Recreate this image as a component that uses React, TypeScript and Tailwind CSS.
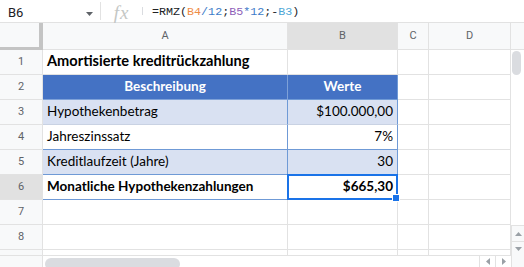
import React from "react";

const G = "border-[#e2e2e2]";

function RowHeader({ n, sel }: { n: number; sel?: boolean }) {
  return (
    <div
      className={`flex items-center justify-center border-r border-b ${G} text-[11px] text-[#5f6368] ${
        sel ? "bg-[#e1e1e1]" : "bg-[#f8f9fa]"
      }`}
      style={{ fontFamily: "Roboto, Arial, sans-serif" }}
    >
      {n}
    </div>
  );
}

function Blank({ extra = "" }: { extra?: string }) {
  return <div className={`border-r border-b ${G} bg-white ${extra}`} />;
}

const cal = { fontFamily: "Lato, 'Open Sans', sans-serif" };

export default function App() {
  return (
    <div className="w-[524px] h-[267px] overflow-hidden bg-white relative select-none">
      {/* Formula bar */}
      <div className={`h-[23px] flex items-stretch border-b ${G}`}>
        <div className="w-[100px] flex items-center pl-[8px] pr-[7px] pt-[4px]">
          <span className="text-[13px] text-[#202124] flex-1" style={{ fontFamily: "Roboto, Arial, sans-serif" }}>
            B6
          </span>
          <svg width="7" height="4" viewBox="0 0 7 4" className="mb-[-2px]">
            <path d="M0 0 L7 0 L3.5 4 Z" fill="#5f6368" />
          </svg>
        </div>
        <div className={`w-px bg-[#e2e2e2] my-[2px]`} />
        <div className="w-[41px] flex items-center justify-center pt-[2px]">
          <span
            className="text-[19px] italic text-[#c4c7c5] leading-none tracking-[1px]"
            style={{ fontFamily: "'Liberation Serif', serif" }}
          >
            fx
          </span>
        </div>
        <div className="w-px bg-[#dadce0] my-[7px]" />
        <div
          className="flex items-center pl-[9px] pt-[4px] text-[11.7px] text-[#202124]"
          style={{ fontFamily: "'Liberation Mono', 'DejaVu Sans Mono', monospace" }}
        >
          <span>=RMZ(</span>
          <span className="text-[#ef8c46]">B4</span>
          <span className="text-[#3d7cc9]">/12</span>
          <span>;</span>
          <span className="text-[#8f5fb9]">B5</span>
          <span className="text-[#3d7cc9]">*12</span>
          <span>;-</span>
          <span className="text-[#4ea6d6]">B3</span>
          <span>)</span>
        </div>
      </div>

      {/* Grid */}
      <div className="grid grid-cols-[43px_245px_110px_31px_82px_13px] grid-rows-[27px_25px_25px_25px_25px_25px_25px_25px_25px_6px]">
        {/* Vertical scrollbar */}
        <div className={`col-start-6 row-start-2 row-span-9 flex flex-col bg-white`}>
          <div className="flex-1 relative">
            <div className="absolute left-[1px] top-[1px] w-[9px] h-[24px] rounded-full bg-[#dadce0]" />
          </div>
          <div className={`h-[16px] border-t border-l ${G} bg-[#f8f9fa] flex items-center justify-center`}>
            <svg width="7" height="4" viewBox="0 0 7 4">
              <path d="M0 4 L7 4 L3.5 0 Z" fill="#9aa0a6" />
            </svg>
          </div>
          <div className={`h-[15px] border-t border-l ${G} bg-[#f8f9fa] flex items-center justify-center`}>
            <svg width="7" height="4" viewBox="0 0 7 4">
              <path d="M0 0 L7 0 L3.5 4 Z" fill="#9aa0a6" />
            </svg>
          </div>
        </div>

        {/* Header row */}
        <div className="bg-[#f8f9fa] border-r-4 border-b-[3px] border-[#c4c4c4]" />
        {["A", "B", "C", "D"].map((c) => (
          <div
            key={c}
            className={`flex items-center justify-center border-r border-b ${G} text-[11px] text-[#5f6368] ${
              c === "B" ? "bg-[#e1e1e1]" : "bg-[#f8f9fa]"
            }`}
            style={{ fontFamily: "Roboto, Arial, sans-serif" }}
          >
            {c}
          </div>
        ))}
        <div className={`border-b ${G} bg-[#f8f9fa]`} />

        {/* Row 1 */}
        <RowHeader n={1} />
        <div
          className={`flex items-end pb-[2px] pl-[4px] border-r border-b ${G} text-[14.6px] font-bold text-black whitespace-nowrap`}
          style={cal}
        >
          Amortisierte kreditrückzahlung
        </div>
        <Blank />
        <Blank />
        <Blank />

        {/* Row 2 */}
        <RowHeader n={2} />
        <div
          className="flex items-end justify-center pb-[3px] bg-[#4472c4] border-r border-b border-[#7ea1d8] text-[13.5px] font-bold text-white"
          style={cal}
        >
          Beschreibung
        </div>
        <div
          className="flex items-end justify-center pb-[3px] bg-[#4472c4] border-r border-b border-[#6f9ad6] text-[13.5px] font-bold text-white"
          style={cal}
        >
          Werte
        </div>
        <Blank />
        <Blank />

        {/* Row 3 */}
        <RowHeader n={3} />
        <div
          className="flex items-end pb-[3px] pl-[4px] bg-[#d9e1f2] border-r border-b border-r-[#6f9ad6] border-b-[#c9d2e3] text-[13.5px] text-black"
          style={cal}
        >
          Hypothekenbetrag
        </div>
        <div
          className="flex items-end justify-end pb-[3px] pr-[4px] bg-[#d9e1f2] border-r border-b border-r-[#6f9ad6] border-b-[#c9d2e3] text-[13.5px] text-black"
          style={cal}
        >
          $100.000,00
        </div>
        <Blank />
        <Blank />

        {/* Row 4 */}
        <RowHeader n={4} />
        <div
          className="flex items-end pb-[3px] pl-[4px] bg-white border-r border-b border-r-[#6f9ad6] border-b-[#6f9ad6] text-[13.5px] text-black"
          style={cal}
        >
          Jahreszinssatz
        </div>
        <div
          className="flex items-end justify-end pb-[3px] pr-[4px] bg-white border-r border-b border-[#6f9ad6] text-[13.5px] text-black"
          style={cal}
        >
          7%
        </div>
        <Blank />
        <Blank />

        {/* Row 5 */}
        <RowHeader n={5} />
        <div
          className="flex items-end pb-[3px] pl-[4px] bg-[#d9e1f2] border-r border-b border-[#6f9ad6] text-[13.5px] text-black"
          style={cal}
        >
          Kreditlaufzeit (Jahre)
        </div>
        <div
          className="flex items-end justify-end pb-[3px] pr-[4px] bg-[#d9e1f2] border-r border-b border-[#6f9ad6] text-[13.5px] text-black"
          style={cal}
        >
          30
        </div>
        <Blank />
        <Blank />

        {/* Row 6 */}
        <RowHeader n={6} sel />
        <div
          className="flex items-end pb-[3px] pl-[4px] bg-white border-r border-b border-[#6f9ad6] text-[13.5px] font-bold text-black whitespace-nowrap"
          style={cal}
        >
          Monatliche Hypothekenzahlungen
        </div>
        <div
          className="relative flex items-end justify-end pb-[3px] pr-[4px] bg-white border-r border-b border-[#6f9ad6] text-[13.5px] font-bold text-black"
          style={cal}
        >
          $665,30
          <div className="absolute left-[-1px] top-[-1px] right-[-1px] bottom-[-1px] border-2 border-[#1a73e8]" />
          <div className="absolute right-[-3px] bottom-[-3px] w-[6px] h-[6px] bg-[#1a73e8] border border-white box-content" />
        </div>
        <Blank />
        <Blank />

        {/* Row 7 */}
        <RowHeader n={7} />
        <Blank />
        <Blank />
        <Blank />
        <Blank />

        {/* Row 8 */}
        <RowHeader n={8} />
        <Blank />
        <Blank />
        <Blank />
        <Blank />

        {/* Row 9 partial */}
        <div className={`border-r border-b ${G} bg-[#f8f9fa]`} />
        <Blank />
        <Blank />
        <Blank />
        <Blank />
      </div>

      {/* Horizontal scrollbar */}
      <div className={`h-[11px] flex bg-white`}>
        <div className={`w-[43px] border-r ${G} bg-[#f8f9fa]`} />
        <div className="flex-1 relative">
          <div className="absolute left-[2px] top-[2px] w-[135px] h-[12px] rounded-full bg-[#dadce0]" />
        </div>
        <div className={`w-[16px] border-l ${G} flex items-center justify-center`}>
          <svg width="4" height="7" viewBox="0 0 4 7">
            <path d="M4 0 L4 7 L0 3.5 Z" fill="#9aa0a6" />
          </svg>
        </div>
        <div className={`w-[16px] border-l ${G} flex items-center justify-center`}>
          <svg width="4" height="7" viewBox="0 0 4 7">
            <path d="M0 0 L0 7 L4 3.5 Z" fill="#9aa0a6" />
          </svg>
        </div>
        <div className={`w-[13px] border-l ${G} bg-[#f8f9fa]`} />
      </div>
    </div>
  );
}
